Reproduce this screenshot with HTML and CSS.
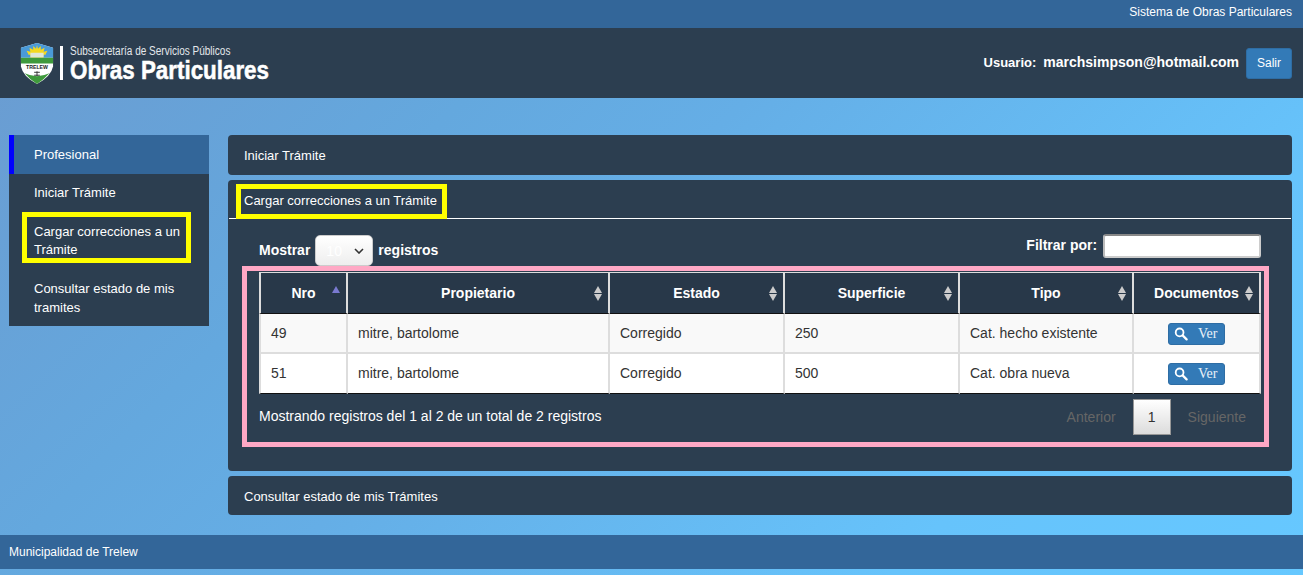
FILE: index.html
```html
<!DOCTYPE html>
<html lang="es">
<head>
    <meta charset="UTF-8">
    <meta name="viewport" content="width=device-width, initial-scale=1.0">
    <title>Obras Particulares</title>
    <link rel="stylesheet" href="styles.css">
</head>
<body>

<div class="topbar">Sistema de Obras Particulares</div>

<div class="header">
    <div class="logo">
        <svg class="shield" width="34" height="43" viewBox="0 0 36 44" preserveAspectRatio="none">
            <path d="M1 6 L18 1 L35 6 L35 25 Q33 35 18 43 Q3 35 1 25 Z" fill="#fff"/>
            <path d="M1 6 L18 1 L35 6 L35 16 L1 16 Z" fill="#4a9ad8"/>
            <circle cx="18" cy="14" r="7" fill="#f4d820"/>
            <path d="M18 3 L19 7 L22 4 L22 8 L26 6 L25 10 L29 9 L27 13 L9 13 L7 9 L11 10 L10 6 L14 8 L14 4 L17 7 Z" fill="#f4d820"/>
            <rect x="11" y="11" width="14" height="5" fill="#dfe6d8"/>
            <path d="M1 16 L35 16 L35 22 L1 22 Z" fill="#3f9a3c"/>
            <path d="M5 32 Q18 38 31 32 Q26 38 18 43 Q10 38 5 32 Z" fill="#3f9a3c"/>
            <text class="shield-text" x="18" y="28" text-anchor="middle">TRELEW</text>
            <path d="M15 31 L21 31 M18 30 L18 35 M15 34 L21 34" stroke="#333" stroke-width="1" fill="none"/>
        </svg>
        <div class="logo-bar"></div>
        <div class="logo-text">
            <div class="logo-sub">Subsecretaría de Servicios Públicos</div>
            <div class="logo-main">Obras Particulares</div>
        </div>
    </div>
    <div class="user">
        <span class="user-label">Usuario:</span>
        <span class="user-mail">marchsimpson@hotmail.com</span>
        <button class="btn-salir">Salir</button>
    </div>
</div>

<div class="page">
    <div class="sidebar">
        <div class="side-item side-active">Profesional</div>
        <div class="side-item">Iniciar Trámite</div>
        <div class="side-item side-marked">Cargar correcciones a un Trámite</div>
        <div class="side-item side-last">Consultar estado de mis tramites</div>
    </div>

    <div class="main">
        <div class="panel">
            <div class="panel-title">Iniciar Trámite</div>
        </div>

        <div class="panel">
            <div class="panel-head">
                <div class="title-marked">Cargar correcciones a un Trámite</div>
            </div>
            <div class="panel-body">
                <div class="tools">
                    <label class="show-len">Mostrar
                        <span class="len-wrap">
                            <select class="len-select"><option>10</option></select>
                            <svg class="len-arrow" width="10" height="6" viewBox="0 0 10 6"><path d="M1 1 L5 5 L9 1" fill="none" stroke="#333" stroke-width="1.6"/></svg>
                        </span>
                        registros</label>
                    <label class="filter">Filtrar por: <input class="filter-input" type="text"></label>
                </div>
                <div class="table-mark">
                    <table class="grid">
                        <thead>
                            <tr>
                                <th>Nro<span class="sort-asc"></span></th>
                                <th>Propietario<span class="sort"></span></th>
                                <th>Estado<span class="sort"></span></th>
                                <th>Superficie<span class="sort"></span></th>
                                <th>Tipo<span class="sort"></span></th>
                                <th class="th-docs">Documentos<span class="sort"></span></th>
                            </tr>
                        </thead>
                        <tbody>
                            <tr class="odd">
                                <td>49</td>
                                <td>mitre, bartolome</td>
                                <td>Corregido</td>
                                <td>250</td>
                                <td>Cat. hecho existente</td>
                                <td class="td-docs">
                                    <a class="btn-ver">
                                        <svg width="14" height="14" viewBox="0 0 14 14"><circle cx="5.6" cy="5.4" r="3.9" fill="none" stroke="#fff" stroke-width="1.8"/><path d="M8.6 8.4 L12.6 12.4" stroke="#fff" stroke-width="2.2" stroke-linecap="round"/></svg>
                                        Ver
                                    </a>
                                </td>
                            </tr>
                            <tr>
                                <td>51</td>
                                <td>mitre, bartolome</td>
                                <td>Corregido</td>
                                <td>500</td>
                                <td>Cat. obra nueva</td>
                                <td class="td-docs">
                                    <a class="btn-ver">
                                        <svg width="14" height="14" viewBox="0 0 14 14"><circle cx="5.6" cy="5.4" r="3.9" fill="none" stroke="#fff" stroke-width="1.8"/><path d="M8.6 8.4 L12.6 12.4" stroke="#fff" stroke-width="2.2" stroke-linecap="round"/></svg>
                                        Ver
                                    </a>
                                </td>
                            </tr>
                        </tbody>
                    </table>
                    <div class="table-foot">
                        <div class="info">Mostrando registros del 1 al 2 de un total de 2 registros</div>
                        <div class="paging">
                            <span class="page-off">Anterior</span>
                            <span class="page-cur">1</span>
                            <span class="page-off">Siguiente</span>
                        </div>
                    </div>
                </div>
            </div>
        </div>

        <div class="panel">
            <div class="panel-title panel-title-last">Consultar estado de mis Trámites</div>
        </div>
    </div>
</div>

<div class="footer">Municipalidad de Trelew</div>

</body>
</html>
```

FILE: styles.css
```css
html {
    height: 100%;
}
body {
    margin: 0;
    min-height: 100%;
    font-family: "Liberation Sans", Arial, sans-serif;
    font-size: 13px;
    color: #fff;
    background: linear-gradient(135deg, #6b9bd0 0%, #64a8de 30%, #65aee6 45%, #66c3fb 78%, #66c8ff 100%);
    overflow: hidden;
}

.topbar {
    height: 28px;
    line-height: 24px;
    padding-right: 11px;
    text-align: right;
    font-size: 12px;
    background-color: #336699;
}

.header {
    height: 70px;
    display: flex;
    align-items: center;
    justify-content: space-between;
    padding: 0 11px 0 20px;
    background-color: #2c3e50;
}
.logo {
    display: flex;
    align-items: center;
}
.shield {
    margin-right: 6px;
    margin-top: 1px;
}
.shield-text {
    font-family: "Liberation Sans", Arial, sans-serif;
    font-size: 5.5px;
    font-weight: bold;
    fill: #222;
}
.logo-bar {
    width: 3px;
    height: 34px;
    margin-right: 7px;
    background-color: #fff;
}
.logo-text {
    width: 200px;
    height: 36px;
    white-space: nowrap;
}
.logo-sub {
    font-size: 12px;
    line-height: 13px;
    transform: scaleX(0.835);
    transform-origin: left;
    color: #e4e8ec;
}
.logo-main {
    font-size: 25px;
    line-height: 25px;
    font-weight: bold;
    -webkit-text-stroke: 0.5px #fff;
    transform: scaleX(0.895);
    transform-origin: left;
}
.user {
    display: flex;
    align-items: center;
    font-weight: bold;
}
.user-label {
    font-size: 13px;
    margin-right: 7px;
    padding-bottom: 2px;
}
.user-mail {
    font-size: 14px;
    margin-right: 7px;
    padding-bottom: 2px;
}
.btn-salir {
    width: 46px;
    height: 31px;
    padding: 0;
    font-family: "Liberation Sans", Arial, sans-serif;
    font-size: 12px;
    color: #fff;
    background-color: #337ab7;
    border: 1px solid #2e6da4;
    border-radius: 3px;
}

.page {
    display: flex;
    align-items: flex-start;
    gap: 19px;
    padding: 37px 11px 20px 9px;
}

.sidebar {
    width: 200px;
    flex-shrink: 0;
    background-color: #2c3e50;
}
.side-item {
    padding: 9px 25px 10px;
    line-height: 19px;
}
.side-active {
    padding-top: 10px;
    padding-left: 20px;
    border-left: 5px solid #0000ff;
    background-color: #336699;
}
.side-marked {
    box-sizing: border-box;
    height: 51px;
    margin: 0 18px 6px 13px;
    padding: 6px 4px 0 7px;
    line-height: 18px;
    border: 5px solid #ffff00;
}
.side-last {
    padding: 10px 20px 9px 25px;
}

.main {
    flex: 1;
    display: flex;
    flex-direction: column;
    gap: 5px;
}
.panel {
    background-color: #2c3e50;
    border-radius: 4px;
}
.panel-title {
    height: 40px;
    line-height: 41px;
    padding-left: 16px;
}
.panel-title-last {
    height: 39px;
}
.panel-head {
    height: 34px;
    padding: 4px 0 0 7px;
    margin: 0 1px;
    border-bottom: 1px solid #fff;
}
.title-marked {
    display: inline-block;
    height: 25px;
    line-height: 23px;
    padding: 0 5px 0 3px;
    border: 5px solid #ffff00;
}
.panel-body {
    padding-bottom: 24px;
}

.tools {
    display: flex;
    justify-content: space-between;
    align-items: flex-start;
    height: 32px;
    margin-top: 15px;
    padding: 0 31px;
    font-size: 14px;
    font-weight: bold;
}
.show-len {
    display: flex;
    align-items: center;
    gap: 5px;
    margin-top: 1px;
    line-height: 29px;
}
.len-wrap {
    position: relative;
    display: flex;
}
.len-select {
    appearance: none;
    width: 58px;
    height: 31px;
    padding: 0 0 0 10px;
    font-family: "Liberation Sans", Arial, sans-serif;
    font-size: 14px;
    color: #fff;
    background: linear-gradient(#fff, #eee);
    border: 1px solid #ccc;
    border-radius: 5px;
}
.len-arrow {
    position: absolute;
    top: 13px;
    left: 39px;
}
.filter-input {
    width: 150px;
    height: 18px;
    margin-left: 2px;
    vertical-align: middle;
    background-color: #fff;
    border: 2px solid;
    border-color: #888 #ccc #ccc #bbb;
    border-radius: 3px;
}

.table-mark {
    margin: 0 23px 0 14px;
    padding: 1px 3px 0 12px;
    height: 170px;
    border: 5px solid #ffa8c5;
}
.grid {
    width: 1002px;
    table-layout: fixed;
    border-collapse: separate;
    border-spacing: 0;
    font-size: 14px;
    color: #333;
}
.grid th {
    position: relative;
    height: 40px;
    padding: 0;
    color: #fff;
    background-color: #283849;
    border-top: 1px solid #ddd;
    border-right: 2px solid #ddd;
    border-bottom: 1px solid #111;
}
.grid td {
    height: 38px;
    padding: 0 0 0 10px;
    background-color: #fff;
    border-right: 2px solid #ddd;
    border-bottom: 2px solid #ddd;
}
.grid .odd td {
    background-color: #f9f9f9;
}
.grid tbody tr:last-child td {
    padding-bottom: 1px;
    border-bottom: 1px solid #111;
}
.grid th:first-child,
.grid td:first-child {
    width: 85px;
    border-left: 2px solid #ddd;
}
.grid th:nth-child(2) { width: 260px; }
.grid th:nth-child(3) { width: 173px; }
.grid th:nth-child(4) { width: 173px; }
.grid th:nth-child(5) { width: 172px; }
.grid th:nth-child(6) { width: 125px; }

.sort,
.sort-asc {
    position: absolute;
    right: 6px;
    top: 13px;
    width: 0;
    height: 0;
    border-left: 4px solid transparent;
    border-right: 4px solid transparent;
}
.sort {
    border-bottom: 7px solid #ccc;
}
.sort::after {
    content: "";
    position: absolute;
    left: -4px;
    top: 8px;
    border-left: 4px solid transparent;
    border-right: 4px solid transparent;
    border-top: 7px solid #ccc;
}
.sort-asc {
    border-bottom: 7px solid #7a7ad0;
}
.th-docs {
    text-align: center;
}

.grid .td-docs {
    height: 36px;
    padding-top: 2px;
    padding-left: 0;
}
.btn-ver {
    display: flex;
    align-items: center;
    gap: 10px;
    box-sizing: border-box;
    width: 57px;
    height: 22px;
    margin: 0 auto;
    padding-left: 5px;
    font-family: "Liberation Serif", "Times New Roman", serif;
    font-size: 14px;
    color: #e8f0f8;
    background-color: #337ab7;
    border: 1px solid #2e6da4;
    border-radius: 3px;
}

.table-foot {
    display: flex;
    justify-content: space-between;
    font-size: 14px;
}
.info {
    padding-top: 14px;
}
.paging {
    display: flex;
    align-items: center;
    margin-top: 5px;
    margin-right: 15px;
}
.page-off {
    color: #666;
    padding: 0 17px;
}
.page-off:last-child {
    padding-right: 0;
}
.page-cur {
    box-sizing: border-box;
    width: 38px;
    height: 36px;
    line-height: 34px;
    text-align: center;
    color: #333;
    background: linear-gradient(#fff, #dcdcdc);
    border: 1px solid #979797;
}

.footer {
    height: 34px;
    line-height: 34px;
    padding-left: 9px;
    font-size: 12px;
    background-color: #336699;
}
```
